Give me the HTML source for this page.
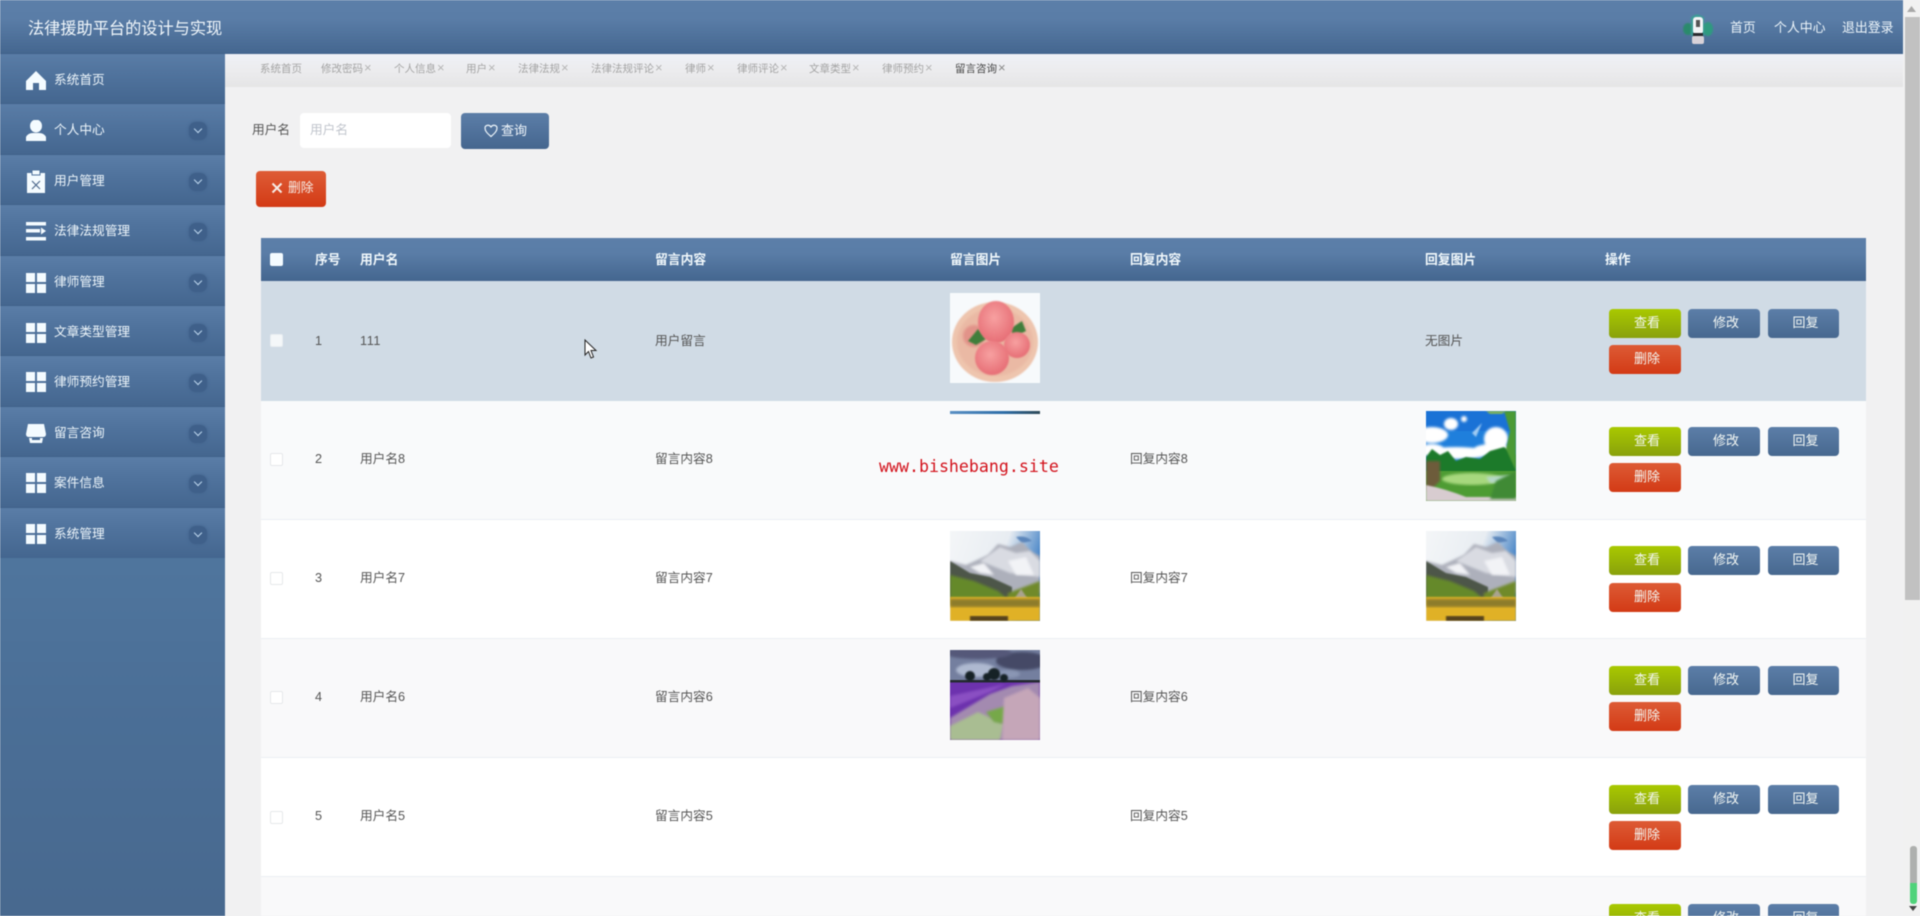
<!DOCTYPE html>
<html lang="zh">
<head>
<meta charset="utf-8">
<title>法律援助平台的设计与实现</title>
<style>
html,body{margin:0;padding:0;width:1920px;height:916px;overflow:hidden;background:#f1f1f2}
body{font-family:"Liberation Sans","Noto Sans CJK SC",sans-serif;font-size:12.7px;color:#555}
#w{position:absolute;left:0;top:0;width:1920px;height:916px;overflow:hidden;filter:blur(.45px)}
.a,.t,.r,.b,.n,.g,.c,.i,.x{position:absolute}
.t{white-space:nowrap;line-height:20px}
.hd{background:linear-gradient(#5c7fa9 0%,#5a7da7 35%,#44668f 100%)}
.n{left:0;width:225px;height:50.4px;background:linear-gradient(#5a7da7 0%,#4f729c 45%,#44668f 100%);box-shadow:0 -1px 0 rgba(60,90,130,.4)}
.n .t{left:54px;top:16px;color:#eef6fb;font-size:12.7px}
.n svg{position:absolute;left:26px;top:14px}
.n i{position:absolute;left:189px;top:18px;width:18px;height:18px;border-radius:7px;background:#3f608a;box-shadow:0 0 3px #3f608a}
.n i:after{content:"";position:absolute;left:6px;top:4px;width:5px;height:5px;border-right:1.3px solid #bcd6ee;border-bottom:1.3px solid #bcd6ee;transform:rotate(45deg)}
.g{top:59px;color:#a3a3a3;font-size:10.5px;line-height:20px;white-space:nowrap}
.g span{color:#b5b5b5;margin-left:1px;font-size:13px;line-height:13px}
.r{left:261px;width:1605px;height:119px;border-bottom:1px solid #eceff3;box-sizing:border-box}
.b{width:72px;height:29px;border-radius:4px;color:#f4f8f4;font-size:13px;line-height:28px;text-align:center;text-indent:4px}
.v{background:linear-gradient(#a9c900,#89a10c)}
.m{background:linear-gradient(#5c7ea8,#47688f)}
.d{background:linear-gradient(#dd5b35,#d33a15)}
.c{left:270px;width:13px;height:13px;border:1px solid #e6e8ea;border-radius:2px;background:#fff;box-sizing:border-box}
.i{width:90px;height:90px}
.th{top:250px;color:#f2f9fc;font-size:12.8px;font-weight:700}
</style>
</head>
<body>
<div id="w">

<svg width="0" height="0" style="position:absolute">
<defs>
<linearGradient id="sk" x1="0" y1="0" x2="1" y2="0.35"><stop offset="0" stop-color="#f4f6f8"/><stop offset=".6" stop-color="#e8edf2"/><stop offset="1" stop-color="#3f7fc4"/></linearGradient>
<radialGradient id="pe" cx=".45" cy=".4" r=".65"><stop offset="0" stop-color="#f7a0a0"/><stop offset="1" stop-color="#e56a72"/></radialGradient>
<filter id="bl"><feGaussianBlur stdDeviation="1.2"/></filter>
<filter id="b2"><feGaussianBlur stdDeviation=".7"/></filter>
<symbol id="mt" viewBox="0 0 90 90">
<rect width="90" height="90" fill="url(#sk)"/>
<path d="M66 6 Q76 4 82 10 L72 12Z" fill="#5b86bb" filter="url(#b2)"/>
<path d="M0 30 L16 34 L38 24 L48 13 L60 16 L72 11 L82 21 L90 25 V62 H0Z" fill="#adb0bb" filter="url(#bl)"/>
<path d="M30 30 L50 16 L66 22 L80 20 L90 30 V46 L60 42Z" fill="#d9dbe2" filter="url(#bl)"/>
<path d="M20 36 L34 32 L44 44 L30 42Z M58 30 L76 26 L84 44 L66 44Z" fill="#f2f3f6" filter="url(#bl)"/>
<path d="M0 30 L20 42 L40 46 L62 56 V70 H0Z" fill="#4d5748" filter="url(#b2)"/>
<path d="M0 44 L24 50 L48 60 L60 70 V74 H0Z" fill="#65892a" filter="url(#bl)"/>
<path d="M58 62 L90 50 V74 H56Z" fill="#6f8a2c" filter="url(#bl)"/>
<path d="M60 74 L71 58 L82 74Z" fill="#a9a38f" filter="url(#b2)"/>
<rect y="66" width="90" height="24" fill="#e0b128" filter="url(#b2)"/>
<rect y="68" width="90" height="8" fill="#8e7c2c" filter="url(#bl)"/>
<rect x="20" y="85" width="38" height="5" fill="#57421a" filter="url(#b2)"/>
</symbol>
<symbol id="ln" viewBox="0 0 90 90">
<rect width="90" height="90" fill="#1f7fdc"/>
<rect width="90" height="20" fill="#1a72d6"/>
<g fill="#fff" filter="url(#bl)"><ellipse cx="6" cy="24" rx="16" ry="8"/><ellipse cx="25" cy="13" rx="7" ry="6"/><ellipse cx="38" cy="8" rx="3" ry="3"/><ellipse cx="70" cy="28" rx="12" ry="12"/><ellipse cx="30" cy="42" rx="34" ry="6"/><ellipse cx="6" cy="38" rx="12" ry="5"/><ellipse cx="66" cy="38" rx="18" ry="5"/></g>
<path d="M46 22 L56 12 L50 26Z" fill="#9fcbf2" filter="url(#b2)"/>
<path d="M0 46 L6 38 L14 44 L22 40 L30 50 L40 46 L54 48 L64 40 L78 36 L90 44 V68 H0Z" fill="#1f7a2b" filter="url(#b2)"/>
<path d="M78 0 H90 V60 L80 38 L84 20Z" fill="#4b9a34" filter="url(#b2)"/>
<path d="M60 0 H80 L76 3 H64Z" fill="#7fb35a" filter="url(#b2)"/>
<rect y="60" width="90" height="30" fill="#4e9c33"/>
<ellipse cx="46" cy="68" rx="30" ry="6" fill="#a7d87e" filter="url(#bl)"/>
<path d="M60 66 L84 64 L88 72 L64 72Z" fill="#b6d8c8" filter="url(#bl)"/>
<path d="M0 50 H14 V70 L4 80 H0Z" fill="#6d5c3a" filter="url(#bl)"/>
<path d="M0 74 Q20 78 40 86 H90 V90 H0Z" fill="#d8ccd0" filter="url(#b2)"/>
<path d="M70 70 L90 60 V88 H64Z" fill="#3f8a36" filter="url(#bl)"/>
</symbol>
<symbol id="lv" viewBox="0 0 90 90">
<rect width="90" height="32" fill="#747f9f"/>
<g filter="url(#bl)"><ellipse cx="72" cy="11" rx="26" ry="9" fill="#454a66"/><ellipse cx="28" cy="3" rx="34" ry="6" fill="#555879"/><ellipse cx="26" cy="20" rx="20" ry="7" fill="#aeb9d0"/><ellipse cx="58" cy="24" rx="12" ry="4" fill="#8a96b4"/></g>
<rect y="30" width="90" height="60" fill="#6d32ae"/>
<path d="M0 46 L56 34 L40 42 L0 58Z" fill="#8a4fc2" filter="url(#bl)"/>
<path d="M0 68 L40 44 L62 36 L90 32 V90 H0Z" fill="#a38ab0" filter="url(#bl)"/>
<path d="M0 76 L28 62 L54 74 L50 90 H0Z" fill="#a9bd92" filter="url(#bl)"/>
<path d="M36 62 L56 56 L54 74 L44 72Z" fill="#76a84a" filter="url(#bl)"/>
<path d="M54 48 L78 38 L90 48 V90 H52Z" fill="#c5a6b8" filter="url(#bl)"/>
<rect y="30" width="90" height="2.5" fill="#242a32"/>
<g fill="#152226" filter="url(#b2)"><circle cx="20" cy="26" r="5"/><circle cx="44" cy="24" r="6"/><circle cx="37" cy="27" r="4"/><circle cx="54" cy="28" r="4"/></g>
</symbol>
<symbol id="pc" viewBox="0 0 90 90">
<rect width="90" height="90" fill="#f7fafc"/>
<ellipse cx="45" cy="49" rx="43" ry="40" fill="#eec5ae" filter="url(#b2)"/>
<ellipse cx="45" cy="49" rx="38" ry="34" fill="#eab9a4" filter="url(#bl)"/>
<circle cx="24" cy="43" r="11" fill="#e29389" filter="url(#bl)"/>
<path d="M18 48 L28 36 L36 46 L26 52Z" fill="#3f7e3a" filter="url(#b2)"/>
<path d="M60 36 L72 28 L76 38 L64 44Z" fill="#3f7e3a" filter="url(#b2)"/>
<ellipse cx="46" cy="29" rx="18" ry="21" fill="url(#pe)" filter="url(#b2)"/>
<circle cx="67" cy="52" r="13" fill="url(#pe)" filter="url(#b2)"/>
<ellipse cx="42" cy="65" rx="17" ry="17" fill="url(#pe)" filter="url(#b2)"/>
</symbol>
</defs>
</svg>

<!-- content background -->
<div class="a" style="left:225px;top:54px;width:1678px;height:862px;background:#f1f1f2"></div>

<!-- header -->
<div class="a hd" style="left:0;top:0;width:1903px;height:54px"></div>
<div class="t" style="left:28px;top:18.5px;color:#f2f8fc;font-size:16.2px">法律援助平台的设计与实现</div>
<svg class="a" style="left:1682px;top:14px" width="32" height="31" viewBox="0 0 32 31">
<g filter="url(#b2)"><ellipse cx="6" cy="15" rx="5" ry="6" fill="#2a8a6c"/><ellipse cx="26" cy="15" rx="5" ry="7" fill="#2f9a80"/><path d="M9 3 L15 0 L22 3 L22 22 H9Z" fill="#3a9e96"/></g>
<rect x="11" y="3" width="10" height="17" rx="3" fill="#f2f4f6"/><rect x="14" y="6" width="4" height="7" fill="#555"/><rect x="11" y="19" width="10" height="3" fill="#2a2a2e"/><rect x="10" y="22" width="12" height="8" rx="2" fill="#d8d2d8"/>
</svg>
<div class="t" style="left:1730px;top:18px;color:#eef6fb;font-size:12.9px">首页</div>
<div class="t" style="left:1774px;top:18px;color:#eef6fb;font-size:12.9px">个人中心</div>
<div class="t" style="left:1842px;top:18px;color:#eef6fb;font-size:12.9px">退出登录</div>

<!-- sidebar -->
<div class="a" style="left:0;top:54px;width:225px;height:862px;background:linear-gradient(#4f759d 0%,#4f759d 60%,#4b6f97 75%,#48698f 100%)"></div>

<div class="n" style="top:54px"><svg width="20" height="22" viewBox="0 0 20 22" style="top:15px"><path d="M10 2 L20 12 V21 H13 V14 H7 V21 H0 V12 Z" fill="#f4fbff"/></svg><span class="t">系统首页</span></div>
<div class="n" style="top:104.4px"><svg width="20" height="22" viewBox="0 0 20 22" style="top:16px"><ellipse cx="10" cy="6" rx="6" ry="6.5" fill="#f4fbff"/><path d="M0 21 V17 Q2 13 7 13 H13 Q18 13 20 17 V21Z" fill="#f4fbff"/></svg><span class="t">个人中心</span><i></i></div>
<div class="n" style="top:154.8px"><svg width="20" height="23" viewBox="0 0 20 23" style="top:15px"><rect x="1" y="3" width="18" height="20" fill="#f4fbff"/><rect x="6" y="0" width="8" height="5" fill="#f4fbff" stroke="#4f729c" stroke-width="1"/><path d="M6 11 L14 19 M14 11 L6 19" stroke="#4f6a8c" stroke-width="1.2"/></svg><span class="t">用户管理</span><i></i></div>
<div class="n" style="top:205.2px"><svg width="20" height="20" viewBox="0 0 20 20" style="top:17px"><rect x="0" y="0" width="20" height="3.5" fill="#f4fbff"/><rect x="0" y="7" width="14" height="3.5" fill="#f4fbff"/><rect x="0" y="15" width="20" height="3.5" fill="#f4fbff"/><path d="M15 5.5 L20 9 L15 12.5Z" fill="#f4fbff"/></svg><span class="t">法律法规管理</span><i></i></div>
<div class="n" style="top:255.6px"><svg width="20" height="20" viewBox="0 0 20 20" style="top:17px"><path d="M0 0h9v9H0zM11 0h9v9h-9zM0 11h9v9H0zM11 11h9v9h-9z" fill="#f4fbff"/></svg><span class="t">律师管理</span><i></i></div>
<div class="n" style="top:306px"><svg width="20" height="20" viewBox="0 0 20 20" style="top:17px"><path d="M0 0h9v9H0zM11 0h9v9h-9zM0 11h9v9H0zM11 11h9v9h-9z" fill="#f4fbff"/></svg><span class="t">文章类型管理</span><i></i></div>
<div class="n" style="top:356.4px"><svg width="20" height="20" viewBox="0 0 20 20" style="top:16px"><path d="M0 0h9v9H0zM11 0h9v9h-9zM0 11h9v9H0zM11 11h9v9h-9z" fill="#f4fbff"/></svg><span class="t">律师预约管理</span><i></i></div>
<div class="n" style="top:406.8px"><svg width="20" height="20" viewBox="0 0 20 20" style="top:17px"><path d="M2 0 H18 L20 10 Q20 13 17 13 H3 Q0 13 0 10Z" fill="#f4fbff"/><path d="M3 14 H6 V16 H14 V14 H17 L16 19 H4Z" fill="#f4fbff"/></svg><span class="t">留言咨询</span><i></i></div>
<div class="n" style="top:457.2px"><svg width="20" height="20" viewBox="0 0 20 20" style="top:16px"><path d="M0 0h9v9H0zM11 0h9v9h-9zM0 11h9v9H0zM11 11h9v9h-9z" fill="#f4fbff"/></svg><span class="t">案件信息</span><i></i></div>
<div class="n" style="top:507.6px"><svg width="20" height="20" viewBox="0 0 20 20" style="top:16px"><path d="M0 0h9v9H0zM11 0h9v9h-9zM0 11h9v9H0zM11 11h9v9h-9z" fill="#f4fbff"/></svg><span class="t">系统管理</span><i></i></div>

<!-- tag bar -->
<div class="a" style="left:225px;top:54px;width:1678px;height:33px;background:linear-gradient(#eff1f7 0%,#ececee 50%,#e5e5e6 100%)"></div>
<div class="g" style="left:260px">系统首页</div>
<div class="g" style="left:321px">修改密码<span>×</span></div>
<div class="g" style="left:394px">个人信息<span>×</span></div>
<div class="g" style="left:466px">用户<span>×</span></div>
<div class="g" style="left:518px">法律法规<span>×</span></div>
<div class="g" style="left:591px">法律法规评论<span>×</span></div>
<div class="g" style="left:685px">律师<span>×</span></div>
<div class="g" style="left:737px">律师评论<span>×</span></div>
<div class="g" style="left:809px">文章类型<span>×</span></div>
<div class="g" style="left:882px">律师预约<span>×</span></div>
<div class="g" style="left:955px;color:#444">留言咨询<span style="color:#888">×</span></div>

<!-- search -->
<div class="t" style="left:252px;top:120px;color:#555;font-size:12.7px">用户名</div>
<div class="a" style="left:300px;top:113px;width:151px;height:35px;background:#fff;border-radius:4px"></div>
<div class="t" style="left:310px;top:120px;color:#c0c4cc;font-size:12.7px">用户名</div>
<div class="a" style="left:461px;top:113px;width:88px;height:36px;border-radius:4px;background:linear-gradient(#5c7ea8,#45668f)"></div>
<svg class="a" style="left:484px;top:123px" width="14" height="15" viewBox="0 0 14 15"><path d="M7 13.5 C3 10 1 8 1 5 C1 2.5 4.8 .8 7 4 C9.2 .8 13 2.5 13 5 C13 8 11 10 7 13.5Z" fill="none" stroke="#eef6fb" stroke-width="1.2"/></svg>
<div class="t" style="left:501px;top:121px;color:#f0f6fb;font-size:13px">查询</div>

<!-- delete -->
<div class="a" style="left:256px;top:171px;width:70px;height:36px;border-radius:4px;background:linear-gradient(#de5c36,#d33a15)"></div>
<svg class="a" style="left:271px;top:182px" width="12" height="12" viewBox="0 0 12 12"><path d="M1.5 1.5 L10.5 10.5 M10.5 1.5 L1.5 10.5" stroke="#f6ece6" stroke-width="2"/></svg>
<div class="t" style="left:288px;top:178px;color:#f6ece6;font-size:12.8px">删除</div>

<!-- table head -->
<div class="a hd" style="left:261px;top:238px;width:1605px;height:43px"></div>
<div class="a" style="left:270px;top:253px;width:13px;height:13px;background:#f4fbff;border-radius:2px"></div>
<div class="t th" style="left:315px">序号</div>
<div class="t th" style="left:360px">用户名</div>
<div class="t th" style="left:655px">留言内容</div>
<div class="t th" style="left:950px">留言图片</div>
<div class="t th" style="left:1130px">回复内容</div>
<div class="t th" style="left:1425px">回复图片</div>
<div class="t th" style="left:1605px">操作</div>

<!-- rows -->
<div class="r" style="top:281px;height:120px;background:#d0dbe5;border:0"></div>
<div class="r" style="top:401px;background:#f9fafb"></div>
<div class="r" style="top:520px;background:#fff"></div>
<div class="r" style="top:639px;background:#f9f9fa"></div>
<div class="r" style="top:758px;background:#fff"></div>
<div class="r" style="top:877px;height:39px;background:#f9f9fa;border:0"></div>

<!-- row 1 -->
<div class="c" style="top:334px;background:#f4f7f9;border-color:#e8edf1"></div>
<div class="t" style="left:315px;top:331px">1</div>
<div class="t" style="left:360px;top:331px;letter-spacing:.6px">111</div>
<div class="t" style="left:655px;top:331px">用户留言</div>
<svg class="i" style="left:950px;top:293px"><use href="#pc"/></svg>
<div class="t" style="left:1425px;top:331px">无图片</div>
<div class="b v" style="left:1609px;top:309px">查看</div>
<div class="b m" style="left:1688px;top:309px">修改</div>
<div class="b m" style="left:1768px;top:309px;width:71px">回复</div>
<div class="b d" style="left:1609px;top:345px">删除</div>

<!-- row 2 -->
<div class="c" style="top:453px"></div>
<div class="t" style="left:315px;top:449px">2</div>
<div class="t" style="left:360px;top:449px">用户名8</div>
<div class="t" style="left:655px;top:449px">留言内容8</div>
<div class="a" style="left:950px;top:411px;width:90px;height:3px;background:linear-gradient(90deg,#5a90c4,#2f6ea8 60%,#2f4a58)"></div>
<div class="t" style="left:1130px;top:449px">回复内容8</div>
<svg class="i" style="left:1426px;top:411px"><use href="#ln"/></svg>
<div class="b v" style="left:1609px;top:427px">查看</div>
<div class="b m" style="left:1688px;top:427px">修改</div>
<div class="b m" style="left:1768px;top:427px;width:71px">回复</div>
<div class="b d" style="left:1609px;top:463px">删除</div>

<!-- row 3 -->
<div class="c" style="top:572px"></div>
<div class="t" style="left:315px;top:568px">3</div>
<div class="t" style="left:360px;top:568px">用户名7</div>
<div class="t" style="left:655px;top:568px">留言内容7</div>
<svg class="i" style="left:950px;top:531px"><use href="#mt"/></svg>
<div class="t" style="left:1130px;top:568px">回复内容7</div>
<svg class="i" style="left:1426px;top:531px"><use href="#mt"/></svg>
<div class="b v" style="left:1609px;top:546px">查看</div>
<div class="b m" style="left:1688px;top:546px">修改</div>
<div class="b m" style="left:1768px;top:546px;width:71px">回复</div>
<div class="b d" style="left:1609px;top:583px">删除</div>

<!-- row 4 -->
<div class="c" style="top:691px"></div>
<div class="t" style="left:315px;top:687px">4</div>
<div class="t" style="left:360px;top:687px">用户名6</div>
<div class="t" style="left:655px;top:687px">留言内容6</div>
<svg class="i" style="left:950px;top:650px"><use href="#lv"/></svg>
<div class="t" style="left:1130px;top:687px">回复内容6</div>
<div class="b v" style="left:1609px;top:666px">查看</div>
<div class="b m" style="left:1688px;top:666px">修改</div>
<div class="b m" style="left:1768px;top:666px;width:71px">回复</div>
<div class="b d" style="left:1609px;top:702px">删除</div>

<!-- row 5 -->
<div class="c" style="top:811px"></div>
<div class="t" style="left:315px;top:806px">5</div>
<div class="t" style="left:360px;top:806px">用户名5</div>
<div class="t" style="left:655px;top:806px">留言内容5</div>
<div class="t" style="left:1130px;top:806px">回复内容5</div>
<div class="b v" style="left:1609px;top:785px">查看</div>
<div class="b m" style="left:1688px;top:785px">修改</div>
<div class="b m" style="left:1768px;top:785px;width:71px">回复</div>
<div class="b d" style="left:1609px;top:821px">删除</div>

<!-- row 6 -->
<div class="b v" style="left:1609px;top:904px">查看</div>
<div class="b m" style="left:1688px;top:904px">修改</div>
<div class="b m" style="left:1768px;top:904px;width:71px">回复</div>

<!-- watermark -->
<div class="t" style="left:879px;top:457px;font-family:'DejaVu Sans Mono','Liberation Mono',monospace;font-size:16.6px;color:#d3121c">www.bishebang.site</div>

<!-- cursor -->
<svg class="a" style="left:584px;top:339px" width="14" height="21" viewBox="0 0 14 21"><path d="M1 1 V16 L4.5 12.5 L7 19 L9.5 18 L7 11.5 H12Z" fill="#fff" stroke="#222" stroke-width="1"/></svg>

<!-- scrollbar -->
<div class="a" style="left:1903px;top:0;width:17px;height:916px;background:#f1f1f1"></div>
<div class="a" style="left:1905px;top:17px;width:15px;height:583px;background:#c1c1c1"></div>
<svg class="a" style="left:1906px;top:5px" width="11" height="8" viewBox="0 0 11 8"><path d="M5.5 1 L10 7 H1Z" fill="#a8a8a8"/></svg>
<div class="a" style="left:1910px;top:846px;width:7px;height:37px;background:#aeb0ae;border-radius:3px 3px 0 0"></div>
<div class="a" style="left:1910px;top:883px;width:7px;height:21px;background:#4fd37a;border-radius:0 0 3px 3px"></div>
<svg class="a" style="left:1908px;top:906px" width="10" height="6" viewBox="0 0 10 6"><path d="M1 0 H9 L5 5Z" fill="#444"/></svg>

</div>
</body>
</html>
